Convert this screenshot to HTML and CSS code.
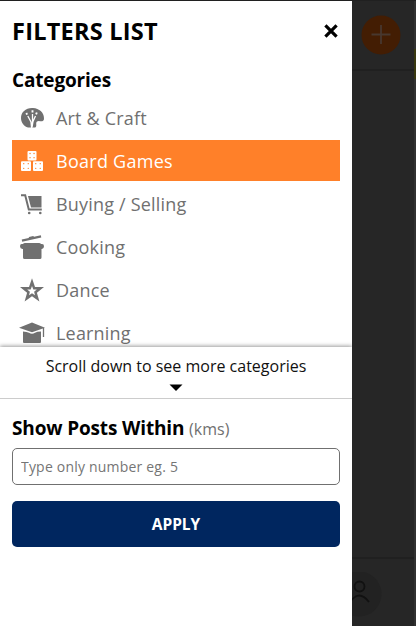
FILE: index.html
```html
<!DOCTYPE html>
<html lang="en">
<head>
<meta charset="utf-8">
<title>Filters</title>
<link rel="stylesheet" href="styles.css">
</head>
<body>
<div class="screen">
  <aside class="drawer">
    <header class="drawer-header">
      <h1>FILTERS LIST</h1>
      <button class="close" aria-label="Close"><svg width="14" height="14" viewBox="0 0 14 14"><path d="M1.400 1.400 12.600 12.600M12.600 1.400 1.400 12.600" stroke="#000" stroke-width="3.200"/></svg></button>
    </header>
    <h2>Categories</h2>
    <ul class="categories">
      <li class="category"><svg viewBox="0 0 24 24"><path fill="currentColor" d="M13 2C6 1.500 1 6 1 12c0 4.600 3 8.400 7 9.600h7c2.500-1 .2-4.300 2-6 2-1.800 5 1.200 6.800-1.600C25 7.500 20 2.400 13 2Z"/><path class="cut" d="m7.800 10 3.200 6 .6 6M12.500 8v8l-1 6M15.500 10l-2.500 5.500-1 6" stroke-width="1.300"/><path class="cut" d="m6.300 7 .8 1.600M12.500 4.200v2.300M16.800 6.500l-.7 1.800" stroke-width="1.900"/></svg><span>Art &amp; Craft</span></li>
      <li class="category active"><svg viewBox="0 0 24 24"><g fill="currentColor"><rect x="7.500" y="2" width="9" height="9.500" rx="1"/><rect x="1" y="12.200" width="10" height="9.800" rx="1"/><rect x="13" y="12.200" width="10" height="9.800" rx="1"/></g><path class="pips" d="M10 4.500h.1M14 4.500h.1M10 8.700h.1M14 8.700h.1M3.700 14.700h.1M8.200 14.700h.1M3.700 19.300h.1M8.200 19.300h.1M15.700 14.700h.1M20.200 14.700h.1M15.700 19.300h.1M20.200 19.300h.1"/></svg><span>Board Games</span></li>
      <li class="category"><svg viewBox="0 0 24 24"><path d="M1 3.200h4.200l3.600 14.300h13" fill="none" stroke="currentColor" stroke-width="2"/><path fill="currentColor" d="M8 4H21.500v11.600H11Z"/><circle cx="9.200" cy="21" r="1.300" fill="currentColor"/><circle cx="20.300" cy="21" r="1.300" fill="currentColor"/></svg><span>Buying / Selling</span></li>
      <li class="category"><svg viewBox="0 0 24 24"><path fill="currentColor" d="m1.700 4.600 7-1.500.3-1.200 4.200-1 .8.900L20.800.3l.5 2.200L2.200 6.800ZM3 9q.5-1 2-1h14q1.500 0 2 1h1q2 0 2 2.300T22 14h-.5v8.500q0 1.500-1.500 1.500H4.500Q3 24 3 22.500V14h-.5Q0 13.600 0 11.200T2 9Z"/></svg><span>Cooking</span></li>
      <li class="category"><svg viewBox="0 0 24 24"><path fill="currentColor" fill-rule="evenodd" d="m12 .2 3 8.700 9 .2-7.100 5.600 2.500 8.800-7.400-5.200-7.400 5.200 2.500-8.800L0 9.100l9-.2ZM12 8l-1.300 3.400-3.500.1 2.700 2.200-.9 3.600 3-2.100 3 2.100-.9-3.600 2.700-2.200-3.500-.1Z"/></svg><span>Dance</span></li>
      <li class="category"><svg class="wide" viewBox="0 0 26 24"><path fill="currentColor" d="m0 6.800 13-5.400 13 5.400-13 4.400ZM4 10.500q4 .2 6 1.300 3 1.700 6 0 2-1.200 6-1.300V21q0 1-1 1H5q-1 0-1-1Z"/><path d="M24.500 7v9" stroke="currentColor" stroke-width="1.300"/></svg><span>Learning</span></li>
    </ul>
    <div class="scroll-hint">
      <p>Scroll down to see more categories</p>
      <svg width="14" height="8" viewBox="0 0 14 8"><path d="M.5.500h13L7 7Z"/></svg>
    </div>
    <form class="distance">
      <label for="distance">Show Posts Within <small>(kms)</small></label>
      <input id="distance" type="text" placeholder="Type only number eg. 5">
      <button class="apply" type="button">APPLY</button>
    </form>
  </aside>
  <div class="backdrop">
    <div class="top-bar"><svg width="40" height="40" viewBox="0 0 40 40"><circle cx="20" cy="20" r="19.500" fill="#431d03"/><path d="M20 10v19M10.500 19.500h19" stroke="#48382f" stroke-width="1.800"/></svg></div>
    <div class="feed"></div>
    <div class="bottom-bar"><svg width="32" height="46" viewBox="0 0 32 46"><circle cx="7" cy="22" r="22.500" fill="#222"/><path d="M12.500 14.500a5 5 0 1 1-10 0 5 5 0 0 1 10 0ZM-2 30q9-13 19 0" fill="none" stroke="#111" stroke-width="1.800"/></svg></div>
  </div>
  <div class="edge"></div>
</div>
</body>
</html>
```
FILE: styles.css
```css
* { box-sizing: border-box; }
body, h1, h2, p, ul { margin: 0; padding: 0; }
body { font-family: "Open Sans", sans-serif; color: #000; }
svg { display: block; flex: none; }
.screen {
  display: flex;
  height: 626px;
  border-top: 1px solid #202020;
  overflow: hidden;
}
.drawer {
  display: flex;
  flex: none;
  flex-direction: column;
  width: 352px;
  background: #fff;
}
.drawer-header {
  display: flex;
  align-items: center;
  justify-content: space-between;
  height: 60px;
  padding: 0 14px 0 12px;
}
h1 { font-size: 23.5px; line-height: 36px; font-weight: 700; letter-spacing: .25px; }
.close { padding: 0; border: 0; background: none; }
h2 { padding: 3px 0 0 12px; font-size: 19px; line-height: 33px; font-weight: 700; letter-spacing: -.17px; }
.categories {
  display: flex;
  flex-direction: column;
  gap: 2px;
  height: 250px;
  padding: 0 12px;
  overflow: hidden;
  list-style: none;
}
.category {
  display: flex;
  flex: none;
  align-items: center;
  gap: 12px;
  height: 41px;
  padding-left: 8px;
  color: #707070;
  font-size: 18px;
  letter-spacing: .19px;
}
.category svg { width: 24px; height: 24px; }
.category .wide { width: 26px; margin: 0 -1px; }
.category.active { color: #fff; background: #ff8029; letter-spacing: .27px; }
.cut { fill: none; stroke: #fff; }
.pips { fill: none; stroke: #ff8029; stroke-width: 1.3; stroke-linecap: round; }
.scroll-hint {
  display: flex;
  flex-direction: column;
  align-items: center;
  height: 52px;
  padding-top: 7px;
  border-bottom: 1px solid #ccc;
  background: #fff;
  box-shadow: 0 -1px 4px rgba(0, 0, 0, .4);
  clip-path: inset(-8px 0 0 0);
  color: #111;
  font-size: 16px;
}
.scroll-hint p { line-height: 24px; margin-bottom: 6px; }
.distance {
  display: flex;
  flex-direction: column;
  padding: 14px 12px;
}
label { font-size: 19px; line-height: 30px; font-weight: 700; letter-spacing: -.15px; }
small { font-size: 16px; font-weight: 400; letter-spacing: 0; color: #707070; }
input {
  height: 37px;
  margin: 4px 0 16px;
  padding: 0 8px;
  border: 1px solid #707070;
  border-radius: 5px;
  font: 14px "Open Sans", sans-serif;
  letter-spacing: .2px;
}
input::placeholder { color: #757575; }
.apply {
  height: 46px;
  padding: 0;
  border: 0;
  border-radius: 5px;
  background: #00265f;
  color: #fff;
  font: 700 15.5px "Open Sans", sans-serif;
}
.backdrop {
  display: flex;
  flex: 1;
  flex-direction: column;
  background: #262626;
}
.edge {
  width: 2px;
  background: linear-gradient(#303030 48px, #38370f 48px 78px, #303030 78px);
}
.top-bar {
  height: 70px;
  padding: 14px 0 0 9px;
  border-bottom: 2px solid #202020;
}
.feed { flex: 1; }
.bottom-bar {
  height: 69px;
  padding-top: 13px;
  border-top: 2px solid #202020;
}
```
